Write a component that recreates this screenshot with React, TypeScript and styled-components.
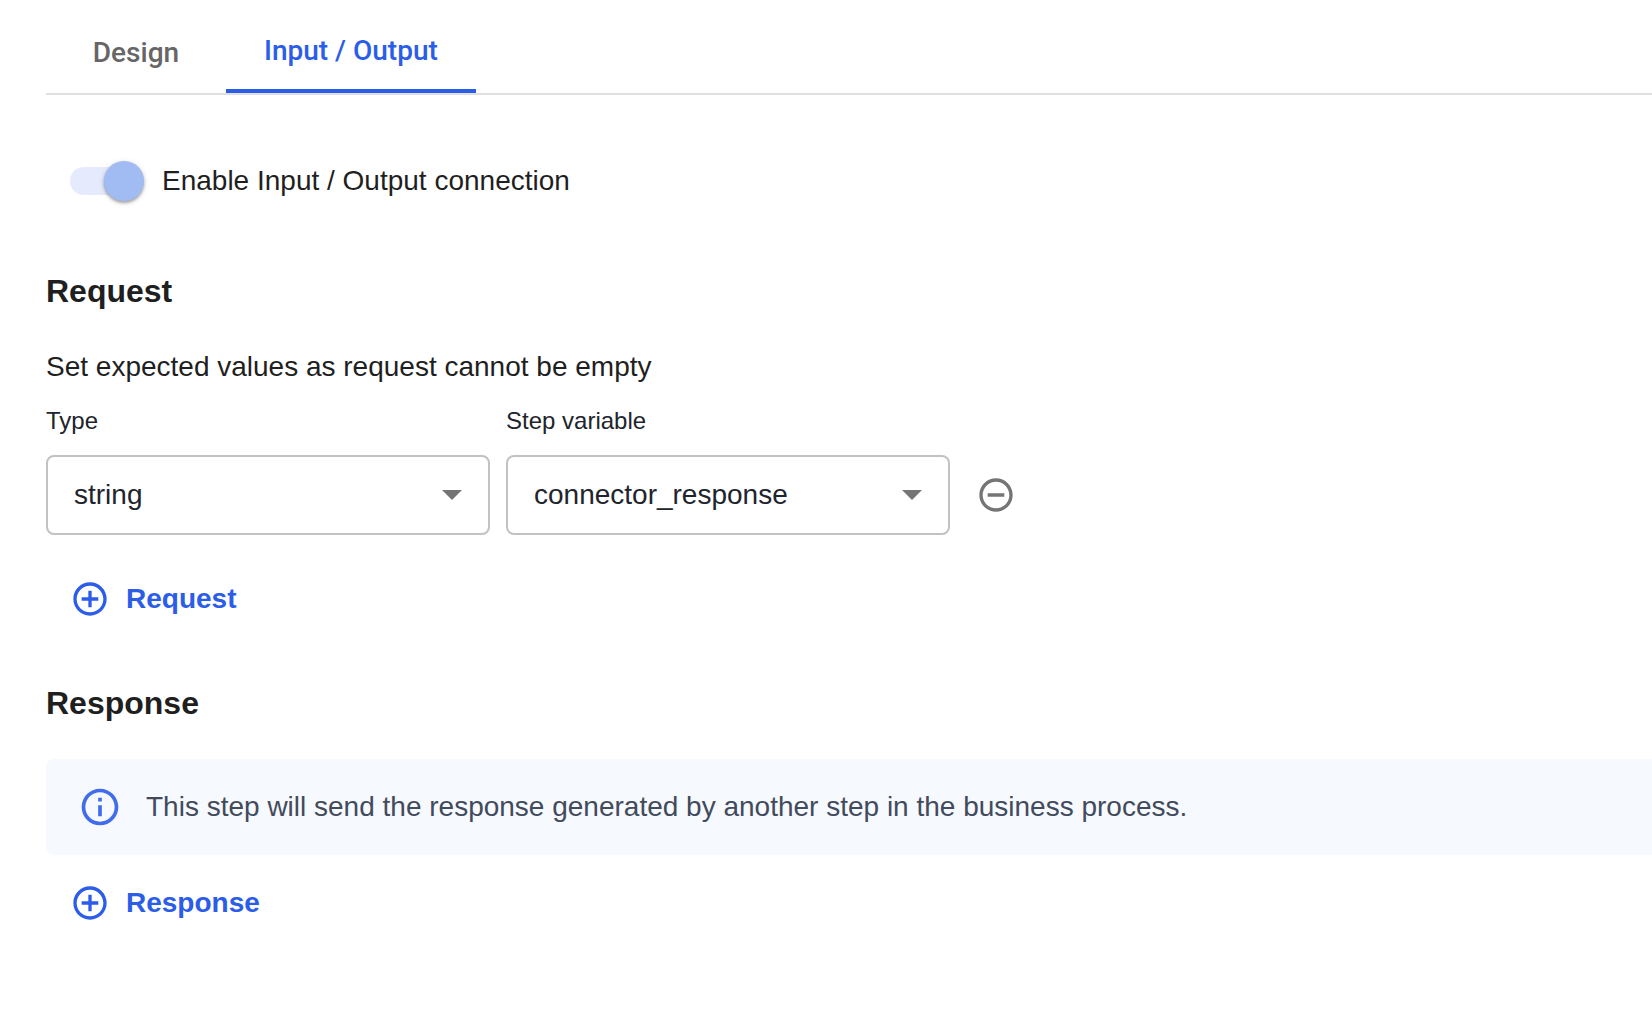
import React, { useState } from "react";
import styled, { createGlobalStyle } from "styled-components";
import { MdAddCircleOutline, MdOutlineInfo, MdRemoveCircleOutline } from "react-icons/md";

const colors = {
  primary: "#2b5de9",
  ink: "#1f1f1f",
  field: "#21242c",
  muted: "#666666",
  icon: "#757575",
  line: "#e0e0e0",
  border: "#c2c2c2",
};

const GlobalStyle = createGlobalStyle`
  *, *::before, *::after {
    box-sizing: border-box;
  }
  body {
    margin: 0;
    background: #fff;
    color: ${colors.ink};
    font-family: "Liberation Sans", Arial, sans-serif;
    font-size: 28px;
    line-height: 32px;
  }
  button, select {
    font: inherit;
  }
`;

const Page = styled.main`
  display: flex;
  flex-direction: column;
  padding: 11px 0 48px 46px;
`;

const TabList = styled.div`
  display: flex;
  border-bottom: 2px solid ${colors.line};
`;

const Tab = styled.button<{ $active: boolean }>`
  min-width: 180px;
  height: 82px;
  padding: 2px 38px 0;
  border: 0;
  border-bottom: ${(p) => (p.$active ? `4px solid ${colors.primary}` : "0")};
  background: none;
  color: ${(p) => (p.$active ? colors.primary : colors.muted)};
  font-family: Roboto, sans-serif;
  font-weight: 500;
  cursor: pointer;
`;

const ToggleRow = styled.label`
  display: flex;
  align-items: center;
  align-self: flex-start;
  gap: 20px;
  height: 40px;
  margin: 66px 0 0 24px;
`;

const Toggle = styled.input`
  appearance: none;
  display: flex;
  align-items: center;
  width: 72px;
  height: 28px;
  margin: 0;
  border-radius: 14px;
  background: #e5eafc;

  &::before {
    content: "";
    flex: none;
    width: 40px;
    height: 40px;
    border-radius: 50%;
    background: #a1bbf3;
    box-shadow: 0 2px 3px rgba(0, 0, 0, 0.3), 0 1px 6px rgba(0, 0, 0, 0.12);
  }
  &:checked::before {
    margin-left: 34px;
  }
`;

const Section = styled.section`
  display: flex;
  flex-direction: column;
  margin-top: 64px;
  &:first-of-type {
    margin-top: 70px;
  }
`;

const Heading = styled.h2`
  margin: 0;
  font-size: 32px;
  line-height: 40px;
  font-weight: 700;
`;

const Hint = styled.p`
  margin: 40px 0 24px;
`;

const FieldRow = styled.div`
  display: flex;
  align-items: flex-end;
  gap: 16px;
  margin-bottom: 44px;
`;

const Field = styled.div`
  display: flex;
  flex-direction: column;
  gap: 20px;
  flex: 0 1 444px;
  color: ${colors.field};
`;

const FieldLabel = styled.label`
  font-size: 24px;
  line-height: 28px;
`;

const SelectBox = styled.div`
  display: grid;
  align-items: center;
  > * {
    grid-area: 1 / 1;
  }
`;

const Select = styled.select`
  appearance: none;
  width: 100%;
  height: 80px;
  padding: 0 64px 0 26px;
  border: 2px solid ${colors.border};
  border-radius: 8px;
  background: #fff;
  color: ${colors.field};
`;

const Caret = styled.svg`
  justify-self: end;
  width: 20px;
  height: 10px;
  margin-right: 28px;
  fill: ${colors.icon};
  pointer-events: none;
`;

const IconButton = styled.button`
  display: flex;
  align-items: center;
  height: 80px;
  padding: 0 10px;
  border: 0;
  background: none;
  color: ${colors.icon};
  cursor: pointer;
`;

const AddButton = styled.button`
  display: flex;
  align-items: center;
  align-self: flex-start;
  gap: 16px;
  height: 40px;
  margin-left: 24px;
  padding: 0;
  border: 0;
  background: none;
  color: ${colors.primary};
  font-weight: 700;
  cursor: pointer;
`;

const Notice = styled.div`
  display: flex;
  align-items: center;
  gap: 24px;
  min-height: 96px;
  margin: 36px 0 28px;
  padding: 0 32px;
  border-radius: 8px 0 0 8px;
  background: #f6f9fe;
  color: #424b5c;

  > svg {
    flex: none;
    color: #416ceb;
  }
`;

const NoticeText = styled.p`
  margin: 0;
`;

function SelectField({ id, label, options }: { id: string; label: string; options: string[] }) {
  return (
    <Field>
      <FieldLabel htmlFor={id}>{label}</FieldLabel>
      <SelectBox>
        <Select id={id} defaultValue={options[0]}>
          {options.map((option) => (
            <option key={option}>{option}</option>
          ))}
        </Select>
        <Caret viewBox="0 0 20 10" aria-hidden="true">
          <path d="M0 0h20L10 10z" />
        </Caret>
      </SelectBox>
    </Field>
  );
}

const tabs = ["Design", "Input / Output"];

export default function App() {
  const [active, setActive] = useState(tabs[1]);
  const [enabled, setEnabled] = useState(true);

  return (
    <>
      <GlobalStyle />
      <Page>
        <TabList role="tablist">
          {tabs.map((tab) => (
            <Tab
              key={tab}
              type="button"
              role="tab"
              aria-selected={tab === active}
              $active={tab === active}
              onClick={() => setActive(tab)}
            >
              {tab}
            </Tab>
          ))}
        </TabList>

        <ToggleRow>
          <Toggle type="checkbox" checked={enabled} onChange={(e) => setEnabled(e.target.checked)} />
          Enable Input / Output connection
        </ToggleRow>

        <Section>
          <Heading>Request</Heading>
          <Hint>Set expected values as request cannot be empty</Hint>
          <FieldRow>
            <SelectField id="request-type" label="Type" options={["string"]} />
            <SelectField id="request-variable" label="Step variable" options={["connector_response"]} />
            <IconButton type="button" aria-label="Remove request">
              <MdRemoveCircleOutline size={40} />
            </IconButton>
          </FieldRow>
          <AddButton type="button">
            <MdAddCircleOutline size={40} />
            Request
          </AddButton>
        </Section>

        <Section>
          <Heading>Response</Heading>
          <Notice role="note">
            <MdOutlineInfo size={44} />
            <NoticeText>
              This step will send the response generated by another step in the business process.
            </NoticeText>
          </Notice>
          <AddButton type="button">
            <MdAddCircleOutline size={40} />
            Response
          </AddButton>
        </Section>
      </Page>
    </>
  );
}
